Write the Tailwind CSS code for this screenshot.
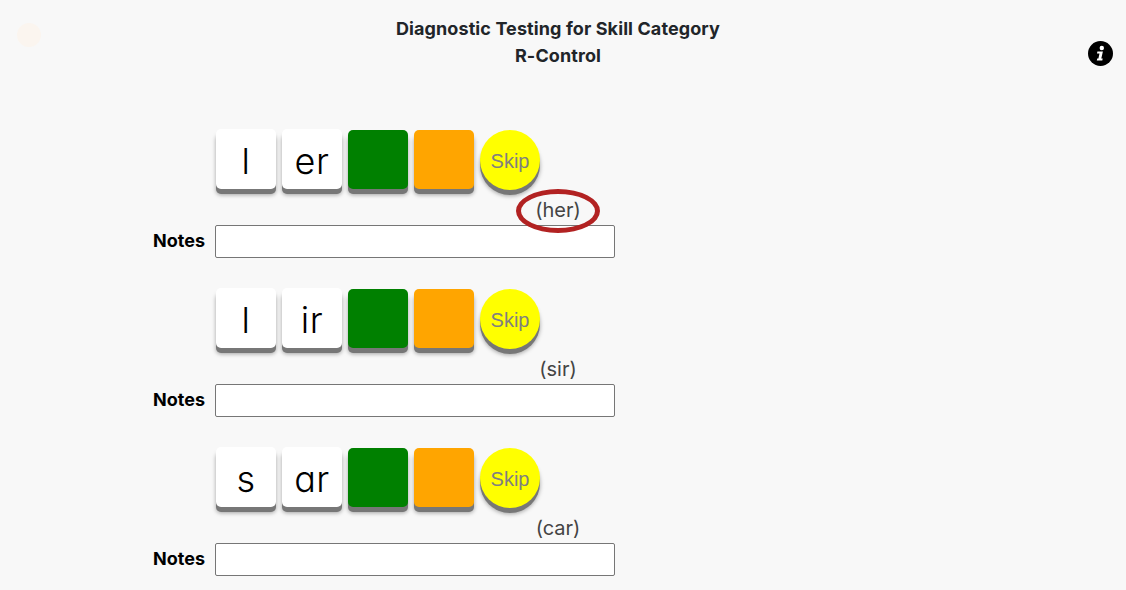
<!doctype html>
<html><head><script src="https://cdn.jsdelivr.net/npm/@tailwindcss/browser@4"></script></head>
<body class="m-0 h-[590px] w-[1126px] overflow-hidden bg-[#f8f8f8] font-['Inter',sans-serif] relative">
<div class="absolute left-[17px] top-[23px] h-6 w-6 rounded-full bg-[#fbf5ef]"></div>
<svg class="absolute left-[1088px] top-[41px] h-[25px] w-[25px]" viewBox="0 0 25 25"><circle cx="12.5" cy="12.5" r="12.5" fill="#000"/><path fill="#fff" d="M13.8 4.8a2.2 2.2 0 1 1 .01 4.4 2.2 2.2 0 0 1-.01-4.4zM9.4 10.4h5.5l-1.6 7.2h1.4l-.4 2H8.8l.4-2h1.2l1.1-5.2H9z"/></svg>
<header class="w-[1116px] pt-[15px] text-center text-[18px] font-bold leading-[27px] tracking-[0.1px] text-[#212529]">
<div>Diagnostic Testing for Skill Category</div><div>R-Control</div></header>
<main class="ml-[140px] mt-[61px] flex w-[475px] flex-col gap-[31px]">
<section class="flex flex-col">
 <div class="ml-[76px] flex h-[66px] gap-[6px]">
  <div class="-mt-px flex h-[60px] w-[60px] items-center justify-center rounded-[5px] bg-white pt-[3px] text-[36px] font-light tracking-[0.5px] [font-feature-settings:'cv11'] shadow-[0_5px_0_#777,0_6px_4px_rgba(0,0,0,0.35)]">l</div>
  <div class="-mt-px flex h-[60px] w-[60px] items-center justify-center rounded-[5px] bg-white pt-[3px] text-[36px] font-light tracking-[0.5px] [font-feature-settings:'cv11'] shadow-[0_5px_0_#777,0_6px_4px_rgba(0,0,0,0.35)]">er</div>
  <div class="h-[59px] w-[60px] rounded-[5px] bg-[#008000] shadow-[0_5px_0_#777,0_6px_4px_rgba(0,0,0,0.35)]"></div>
  <div class="h-[59px] w-[60px] rounded-[5px] bg-[#ffa500] shadow-[0_5px_0_#777,0_6px_4px_rgba(0,0,0,0.35)]"></div>
  <div class="flex h-[60px] w-[60px] items-center justify-center rounded-full bg-[#ffff00] pt-[2px] font-['Liberation_Sans'] text-xl text-[#808080] shadow-[0_5px_0_#777,0_6px_4px_rgba(0,0,0,0.35)]">Skip</div>
 </div>
 <div class="relative ml-[76px] h-[29px] w-[400px] pl-[319px] pt-[1px] text-center text-[20px] font-normal leading-[27px] text-[#444]"><span class="block w-[46px]">(her)</span>
  <div class="absolute left-[300px] top-[-7px] h-[44px] w-[84px] rounded-[50%] border-[5px] border-[#b22222]"></div></div>
 <div class="flex h-[33px] items-center"><label class="w-[65px] pb-[2px] text-right text-[18px] font-bold text-black">Notes</label><div class="ml-[10px] h-[33px] w-[400px] rounded-[2px] border border-[#767676] bg-white"></div></div>
</section>
<section class="flex flex-col">
 <div class="ml-[76px] flex h-[66px] gap-[6px]">
  <div class="-mt-px flex h-[60px] w-[60px] items-center justify-center rounded-[5px] bg-white pt-[3px] text-[36px] font-light tracking-[0.5px] [font-feature-settings:'cv11'] shadow-[0_5px_0_#777,0_6px_4px_rgba(0,0,0,0.35)]">l</div>
  <div class="-mt-px flex h-[60px] w-[60px] items-center justify-center rounded-[5px] bg-white pt-[3px] text-[36px] font-light tracking-[0.5px] [font-feature-settings:'cv11'] shadow-[0_5px_0_#777,0_6px_4px_rgba(0,0,0,0.35)]">ir</div>
  <div class="h-[59px] w-[60px] rounded-[5px] bg-[#008000] shadow-[0_5px_0_#777,0_6px_4px_rgba(0,0,0,0.35)]"></div>
  <div class="h-[59px] w-[60px] rounded-[5px] bg-[#ffa500] shadow-[0_5px_0_#777,0_6px_4px_rgba(0,0,0,0.35)]"></div>
  <div class="flex h-[60px] w-[60px] items-center justify-center rounded-full bg-[#ffff00] pt-[2px] font-['Liberation_Sans'] text-xl text-[#808080] shadow-[0_5px_0_#777,0_6px_4px_rgba(0,0,0,0.35)]">Skip</div>
 </div>
 <div class="ml-[76px] h-[29px] w-[400px] pl-[319px] pt-[1px] text-center text-[20px] font-normal leading-[27px] text-[#444]"><span class="block w-[46px]">(sir)</span></div>
 <div class="flex h-[33px] items-center"><label class="w-[65px] pb-[2px] text-right text-[18px] font-bold text-black">Notes</label><div class="ml-[10px] h-[33px] w-[400px] rounded-[2px] border border-[#767676] bg-white"></div></div>
</section>
<section class="flex flex-col">
 <div class="ml-[76px] flex h-[66px] gap-[6px]">
  <div class="-mt-px flex h-[60px] w-[60px] items-center justify-center rounded-[5px] bg-white pt-[3px] text-[36px] font-light tracking-[0.5px] [font-feature-settings:'cv11'] shadow-[0_5px_0_#777,0_6px_4px_rgba(0,0,0,0.35)]">s</div>
  <div class="-mt-px flex h-[60px] w-[60px] items-center justify-center rounded-[5px] bg-white pt-[3px] text-[36px] font-light tracking-[0.5px] [font-feature-settings:'cv11'] shadow-[0_5px_0_#777,0_6px_4px_rgba(0,0,0,0.35)]">ar</div>
  <div class="h-[59px] w-[60px] rounded-[5px] bg-[#008000] shadow-[0_5px_0_#777,0_6px_4px_rgba(0,0,0,0.35)]"></div>
  <div class="h-[59px] w-[60px] rounded-[5px] bg-[#ffa500] shadow-[0_5px_0_#777,0_6px_4px_rgba(0,0,0,0.35)]"></div>
  <div class="flex h-[60px] w-[60px] items-center justify-center rounded-full bg-[#ffff00] pt-[2px] font-['Liberation_Sans'] text-xl text-[#808080] shadow-[0_5px_0_#777,0_6px_4px_rgba(0,0,0,0.35)]">Skip</div>
 </div>
 <div class="ml-[76px] h-[29px] w-[400px] pl-[319px] pt-[1px] text-center text-[20px] font-normal leading-[27px] text-[#444]"><span class="block w-[46px]">(car)</span></div>
 <div class="flex h-[33px] items-center"><label class="w-[65px] pb-[2px] text-right text-[18px] font-bold text-black">Notes</label><div class="ml-[10px] h-[33px] w-[400px] rounded-[2px] border border-[#767676] bg-white"></div></div>
</section>
</main>
</body></html>
